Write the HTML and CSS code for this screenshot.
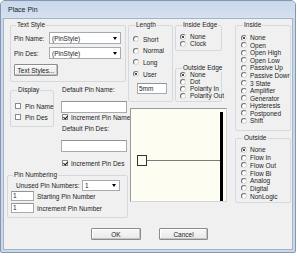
FILE: index.html
```html
<!DOCTYPE html>
<html>
<head>
<meta charset="utf-8">
<link rel="stylesheet" href="styles.css">
</head>
<body>
<div class="window">
  <div class="titlebar">Place Pin</div>
  <div class="client">
    <div class="main">
      <div class="col-left">
        <fieldset class="grp textstyle">
          <legend>Text Style</legend>
          <div class="frow"><span class="lbl">Pin Name:</span><div class="select ts-sel"><span>(PinStyle)</span><i class="arrow"></i></div></div>
          <div class="frow r2"><span class="lbl">Pin Des:</span><div class="select ts-sel"><span>(PinStyle)</span><i class="arrow"></i></div></div>
          <div class="btn ts-btn">Text Styles...</div>
        </fieldset>
        <div class="mid-row">
          <fieldset class="grp display">
            <legend>Display</legend>
            <div class="check"><i class="box"></i>Pin Name</div>
            <div class="check c2"><i class="box"></i>Pin Des</div>
          </fieldset>
          <div class="defaults">
            <div class="dlbl">Default Pin Name:</div>
            <div class="textbox dtb"></div>
            <div class="check dchk"><i class="box on"></i>Increment Pin Name</div>
            <div class="dlbl l2">Default Pin Des:</div>
            <div class="textbox dtb"></div>
            <div class="check dchk c3"><i class="box on"></i>Increment Pin Des</div>
          </div>
        </div>
        <fieldset class="grp numbering">
          <legend>Pin Numbering</legend>
          <div class="unused"><span class="ulbl">Unused Pin Numbers:</span><div class="select un-sel"><span>1</span><i class="arrow"></i></div></div>
          <div class="numrow"><div class="textbox ntb">1</div><span>Starting Pin Number</span></div>
          <div class="numrow n2"><div class="textbox ntb">1</div><span>Increment Pin Number</span></div>
        </fieldset>
      </div>
      <div class="col-mid">
        <div class="toprow">
          <fieldset class="grp length">
            <legend>Length</legend>
            <div class="rlist wide">
              <div class="radio"><i class="dot"></i>Short</div>
              <div class="radio"><i class="dot"></i>Normal</div>
              <div class="radio"><i class="dot"></i>Long</div>
              <div class="radio"><i class="dot on"></i>User</div>
            </div>
            <div class="textbox lentb">5mm</div>
          </fieldset>
          <div class="edges">
            <fieldset class="grp inedge">
              <legend>Inside Edge</legend>
              <div class="rlist tight">
                <div class="radio"><i class="dot on"></i>None</div>
                <div class="radio"><i class="dot"></i>Clock</div>
              </div>
            </fieldset>
            <fieldset class="grp outedge">
              <legend>Outside Edge</legend>
              <div class="rlist tight">
                <div class="radio"><i class="dot on"></i>None</div>
                <div class="radio"><i class="dot"></i>Dot</div>
                <div class="radio"><i class="dot"></i>Polarity In</div>
                <div class="radio"><i class="dot"></i>Polarity Out</div>
              </div>
            </fieldset>
          </div>
        </div>
        <div class="preview">
          <svg width="95" height="92" viewBox="0 0 95 92">
            <rect x="89" y="3" width="3" height="89" fill="#000"/>
            <line x1="16" y1="51.5" x2="89" y2="51.5" stroke="#7a7a7a" stroke-width="1"/>
            <rect x="6.5" y="46.5" width="9" height="10" fill="none" stroke="#333" stroke-width="1"/>
          </svg>
        </div>
      </div>
      <div class="col-right">
        <fieldset class="grp inside">
          <legend>Inside</legend>
          <div class="rlist r-in">
            <div class="radio"><i class="dot on"></i>None</div>
            <div class="radio"><i class="dot"></i>Open</div>
            <div class="radio"><i class="dot"></i>Open High</div>
            <div class="radio"><i class="dot"></i>Open Low</div>
            <div class="radio"><i class="dot"></i>Passive Up</div>
            <div class="radio"><i class="dot"></i>Passive Dowr</div>
            <div class="radio"><i class="dot"></i>3 State</div>
            <div class="radio"><i class="dot"></i>Amplifier</div>
            <div class="radio"><i class="dot"></i>Generator</div>
            <div class="radio"><i class="dot"></i>Hysteresis</div>
            <div class="radio"><i class="dot"></i>Postponed</div>
            <div class="radio"><i class="dot"></i>Shift</div>
          </div>
        </fieldset>
        <fieldset class="grp outside">
          <legend>Outside</legend>
          <div class="rlist r-out">
            <div class="radio"><i class="dot on"></i>None</div>
            <div class="radio"><i class="dot"></i>Flow In</div>
            <div class="radio"><i class="dot"></i>Flow Out</div>
            <div class="radio"><i class="dot"></i>Flow Bi</div>
            <div class="radio"><i class="dot"></i>Analog</div>
            <div class="radio"><i class="dot"></i>Digital</div>
            <div class="radio"><i class="dot"></i>NonLogic</div>
          </div>
        </fieldset>
      </div>
    </div>
    <div class="buttons">
      <div class="btn ok">OK</div>
      <div class="btn cancel">Cancel</div>
    </div>
  </div>
</div>
</body>
</html>
```

FILE: styles.css
```css
* { box-sizing: border-box; }
html, body { margin: 0; padding: 0; background: #ffffff; }
body {
  font-family: "Liberation Sans", Arial, sans-serif;
  font-size: 6.5px;
  color: #1c1c1c;
  width: 297px;
  height: 256px;
  overflow: hidden;
}
.window {
  width: 296px;
  height: 253px;
  border: 1px solid #8596ad;
  border-radius: 5px 5px 2px 2px;
  background: #cad8eb;
  padding: 0 2px 2px 2px;
  display: flex;
  flex-direction: column;
}
.titlebar {
  height: 17px;
  line-height: 17px;
  font-size: 7px;
  color: #1a1a1a;
  background: linear-gradient(#c8d7eb, #d5e1f1);
  margin: 0 -2px;
  padding-left: 7px;
  border-radius: 4px 4px 0 0;
}
.client {
  flex: 1;
  background: #f0f0f0;
  border: 1px solid #a3b3c8;
  padding-top: 2px;
  display: flex;
  flex-direction: column;
}
.main { display: flex; }

/* group boxes */
.grp {
  margin: 0;
  padding: 0;
  min-width: 0;
  border: 1px solid #d3d9de;
  border-radius: 2px;
}
.grp legend {
  padding: 0 1px;
  margin-left: 2px;
  height: 8px;
  line-height: 8px;
  font-size: 6.5px;
  white-space: nowrap;
}

/* left column */
.col-left { width: 118px; margin-left: 6px; display: flex; flex-direction: column; }
.textstyle { width: 116px; padding: 3px 3px 5px 3px; }
.frow { display: flex; align-items: center; height: 12px; }
.frow.r2 { margin-top: 3px; }
.lbl { width: 35px; }
.select {
  display: flex;
  align-items: center;
  justify-content: space-between;
  background: #fff;
  border: 1px solid #a7abb0;
  padding: 0 3px 0 2px;
}
.ts-sel { width: 72px; height: 12px; }
.arrow {
  width: 0; height: 0;
  border-left: 2.5px solid transparent;
  border-right: 2.5px solid transparent;
  border-top: 3px solid #000;
}
.btn {
  display: flex;
  align-items: center;
  justify-content: center;
  background: linear-gradient(#f7f7f7, #e9e9e9);
  border: 1px solid #8c8c8c;
  border-radius: 1px;
  box-shadow: inset -1px -1px 0 #c4c4c4, inset 1px 1px 0 #ffffff;
}
.ts-btn { width: 44px; height: 12px; margin-top: 5px; }

.mid-row { display: flex; margin-top: 4px; }
.display { width: 44px; height: 41px; padding: 8px 0 0 4px; align-self: flex-start; }
.check { display: flex; align-items: center; height: 8px; white-space: nowrap; }
.check.c2 { margin-top: 3px; }
.box {
  width: 6px; height: 6px;
  margin-right: 4px;
  background: #fff;
  border: 1px solid #8a8a8a;
  position: relative;
  flex: none;
}
.box.on::after {
  content: "";
  position: absolute;
  left: 0.5px; top: 0px;
  width: 2px; height: 3px;
  border-right: 1.2px solid #111;
  border-bottom: 1.2px solid #111;
  transform: rotate(40deg);
}
.defaults { margin-left: 7px; width: 67px; display: flex; flex-direction: column; }
.dlbl { height: 8px; line-height: 8px; padding-left: 1px; }
.dlbl.l2 { margin-top: 4px; }
.textbox {
  background: #fff;
  border: 1px solid #a7abb0;
  border-top-color: #8f949b;
}
.dtb { height: 12px; margin-top: 7px; width: 66px; }
.dchk { margin-left: 1px; }
.dchk .box { margin-right: 3px; }
.dchk.c3 { margin-top: 7px; }

.numbering { margin: 4px 0 0 -3px; width: 121px; padding: 1px 0 4px 3px; }
.unused { display: flex; align-items: center; height: 11px; }
.ulbl { margin-left: 5px; width: 66px; }
.un-sel { width: 38px; height: 11px; }
.numrow { display: flex; align-items: center; height: 10px; }
.numrow.n2 { margin-top: 2px; }
.ntb { width: 23px; height: 10px; line-height: 8px; padding-left: 1px; margin-right: 3px; }

/* middle column */
.col-mid { width: 99px; display: flex; flex-direction: column; }
.toprow { display: flex; }
.length { width: 45px; height: 81px; padding: 6px 0 0 4px; }
.rlist { display: flex; flex-direction: column; }
.radio { display: flex; align-items: center; white-space: nowrap; }
.dot {
  width: 6px; height: 6px;
  border-radius: 50%;
  background: #fff;
  border: 1px solid;
  border-color: #6e6e6e #d8d8d8 #d8d8d8 #6e6e6e;
  margin-right: 3px;
  flex: none;
  display: flex;
  align-items: center;
  justify-content: center;
}
.dot.on::after {
  content: "";
  width: 2px; height: 2px;
  border-radius: 50%;
  background: #111;
}
.wide .radio { height: 8px; }
.wide .radio + .radio { margin-top: 3.7px; }
.wide .dot { margin-right: 4px; }
.lentb { width: 30px; height: 11px; margin: 5px 0 0 4px; line-height: 9px; padding-left: 1px; }

.edges { margin-left: 2px; width: 47px; display: flex; flex-direction: column; }
.inedge { height: 30px; padding: 4px 0 0 4px; }
.outedge { margin-top: 13px; height: 38px; padding: 0 0 0 4px; }
.outedge .rlist { margin-top: -1px; }
.tight .radio { height: 7px; }
.tight .dot { margin-right: 4px; }

.preview {
  margin: 6px 0 0 2px;
  width: 97px;
  height: 94px;
  border: 1px solid #9a9a9a;
  border-right-color: #d6d6d6;
  border-bottom-color: #d6d6d6;
  background: #fdfdf1;
}
.preview svg { display: block; }

/* right column */
.col-right { margin-left: 8px; width: 56px; display: flex; flex-direction: column; }
.inside { height: 110px; padding: 4.9px 0 0 5px; }
.r-in .radio { height: 7.57px; }
.outside { margin-top: 3px; height: 69px; padding: 4.1px 0 0 5px; }
.r-out .radio { height: 7.7px; }

/* buttons */
.buttons { display: flex; justify-content: center; gap: 18px; margin-top: 10px; padding-left: 3px; }
.ok { width: 50px; height: 12px; }
.cancel { width: 49px; height: 12px; }
```
